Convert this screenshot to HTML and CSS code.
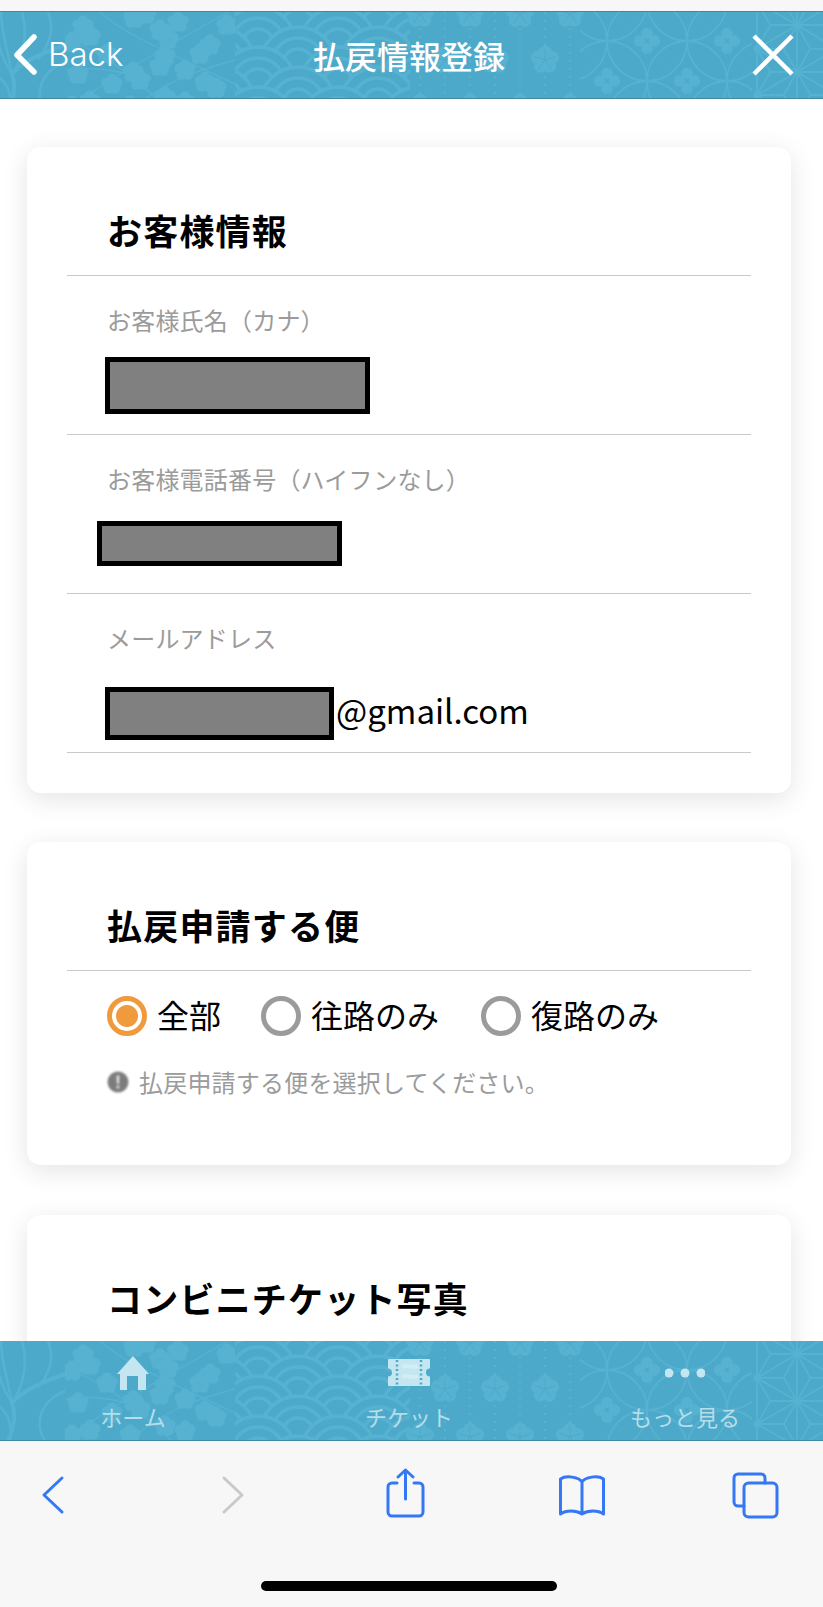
FILE: index.html
```html
<!DOCTYPE html>
<html lang="ja">

<head>
    <meta charset="UTF-8">
    <meta name="viewport" content="width=device-width, initial-scale=1.0">
    <title>払戻情報登録</title>
    <link rel="stylesheet" href="styles.css">
</head>

<body>
    <!-- wagara band shared by the header and the tab bar -->
    <svg class="defs" aria-hidden="true">
        <defs>
            <g id="blossom">
                <circle cx="0" cy="-5.5" r="5.2" />
                <circle cx="5.4" cy="-1.6" r="5.2" />
                <circle cx="3.400" cy="4.500" r="5.2" />
                <circle cx="-3.400" cy="4.500" r="5.2" />
                <circle cx="-5.4" cy="-1.6" r="5.2" />
            </g>
            <g id="ume">
                <circle cx="0" cy="-7.500" r="6.800" />
                <circle cx="7.200" cy="-2.300" r="6.800" />
                <circle cx="4.400" cy="6" r="6.800" />
                <circle cx="-4.400" cy="6" r="6.800" />
                <circle cx="-7.200" cy="-2.300" r="6.800" />
                <path d="M0 0V-11M0 0L10.500 -3.400M0 0L6.500 9M0 0L-6.500 9M0 0L-10.500 -3.400" stroke="#4da9ca" stroke-width="1" />
            </g>
            <g id="clover">
                <circle cx="0" cy="-7.500" r="5.800" />
                <circle cx="7.500" cy="0" r="5.800" />
                <circle cx="0" cy="7.500" r="5.800" />
                <circle cx="-7.500" cy="0" r="5.800" />
            </g>
            <g id="scale" fill="#4da9ca" stroke="#57b2d1" stroke-width="3.5">
                <circle r="38" />
                <circle r="27" />
                <circle r="16" />
            </g>
            <pattern id="seigaiha" width="80" height="40" patternUnits="userSpaceOnUse" patternTransform="translate(18 -7)">
                <use href="#scale" x="40" y="-20" />
                <use href="#scale" x="0" y="0" />
                <use href="#scale" x="80" y="0" />
                <use href="#scale" x="40" y="20" />
                <use href="#scale" x="0" y="40" />
                <use href="#scale" x="80" y="40" />
                <use href="#scale" x="40" y="60" />
            </pattern>
            <clipPath id="clip-plum"><rect x="65" y="0" width="170" height="100" /></clipPath>
            <clipPath id="clip-wave"><rect x="235" y="0" width="175" height="100" /></clipPath>
            <clipPath id="clip-shippo"><rect x="580" y="0" width="172" height="100" /></clipPath>
            <clipPath id="clip-asanoha"><rect x="755" y="0" width="68" height="100" /></clipPath>

            <symbol id="wagara" viewBox="0 0 823 100">
                <!-- lantern curves -->
                <g fill="none" stroke="#57b2d1" stroke-width="2.500">
                    <path d="M12 62C26 42 27 18 22 0" />
                    <path d="M12 62C8 40 1 20 1 0" />
                    <path d="M12 62C4 50 1 42 -2 30" />
                    <path d="M65 33C40 42 22 50 12 62C16 72 14 88 8 100" stroke-width="4" />
                    <path d="M48 0C55 16 50 32 38 47" />
                    <path d="M65 50C40 60 34 82 45 100" />
                    <path d="M0 66C10 74 12 86 10 100" />
                </g>
                <!-- plum branches -->
                <g clip-path="url(#clip-plum)" fill="#57b2d1">
                    <g fill="none" stroke="#57b2d1" stroke-width="1.300">
                        <path d="M66 100C100 72 140 50 235 -4" />
                        <path d="M66 28C100 38 130 62 172 100" />
                        <path d="M100 0C122 20 150 32 235 72" />
                        <path d="M130 100C160 72 190 60 235 48" />
                        <path d="M66 58C90 54 110 58 128 62" />
                    </g>
                    <use href="#blossom" x="83" y="14" />
                    <use href="#blossom" x="90" y="24" />
                    <use href="#blossom" x="72" y="30" />
                    <use href="#blossom" x="107" y="42" />
                    <use href="#blossom" x="134" y="6" />
                    <use href="#blossom" x="146" y="2" />
                    <use href="#blossom" x="160" y="18" />
                    <use href="#blossom" x="168" y="27" />
                    <use href="#blossom" x="178" y="10" />
                    <use href="#blossom" x="227" y="13" />
                    <use href="#blossom" x="210" y="33" />
                    <use href="#blossom" x="200" y="42" />
                    <use href="#blossom" x="165" y="44" />
                    <use href="#blossom" x="160" y="54" />
                    <use href="#blossom" x="185" y="58" />
                    <use href="#blossom" x="205" y="70" />
                    <use href="#blossom" x="216" y="76" />
                    <use href="#blossom" x="133" y="60" />
                    <use href="#blossom" x="140" y="68" />
                    <use href="#blossom" x="78" y="62" />
                    <use href="#blossom" x="90" y="89" />
                    <use href="#blossom" x="72" y="94" />
                    <use href="#blossom" x="112" y="72" />
                    <use href="#blossom" x="165" y="85" />
                    <use href="#blossom" x="185" y="90" />
                    <use href="#blossom" x="130" y="94" />
                </g>
                <!-- seigaiha waves -->
                <rect clip-path="url(#clip-wave)" x="235" y="0" width="175" height="100" fill="url(#seigaiha)" />
                <!-- dotted stripes with ume flowers -->
                <g stroke="#57b2d1" stroke-width="2" stroke-dasharray="2 6">
                    <path d="M420 0V100M445 0V100M470 0V100M495 0V100M520 0V100M545 0V100M570 0V100" />
                </g>
                <g fill="#57b2d1">
                    <use href="#ume" x="420" y="2" />
                    <use href="#ume" x="470" y="2" />
                    <use href="#ume" x="520" y="2" />
                    <use href="#ume" x="570" y="2" />
                    <use href="#ume" x="445" y="48" />
                    <use href="#ume" x="495" y="48" />
                    <use href="#ume" x="545" y="48" />
                    <use href="#ume" x="420" y="96" />
                    <use href="#ume" x="470" y="96" />
                    <use href="#ume" x="520" y="96" />
                    <use href="#ume" x="570" y="96" />
                </g>
                <!-- shippo circles -->
                <g clip-path="url(#clip-shippo)">
                    <g fill="none" stroke="#57b2d1" stroke-width="1.800">
                        <circle cx="567" cy="29" r="40" />
                        <circle cx="647" cy="29" r="40" />
                        <circle cx="727" cy="29" r="40" />
                        <circle cx="607" cy="69" r="40" />
                        <circle cx="687" cy="69" r="40" />
                        <circle cx="767" cy="69" r="40" />
                        <circle cx="647" cy="109" r="40" />
                        <circle cx="727" cy="109" r="40" />
                        <circle cx="607" cy="-11" r="40" />
                        <circle cx="687" cy="-11" r="40" />
                    </g>
                    <g fill="#57b2d1">
                        <use href="#clover" x="647" y="29" />
                        <use href="#clover" x="727" y="29" />
                        <use href="#clover" x="607" y="69" />
                        <use href="#clover" x="687" y="69" />
                    </g>
                </g>
                <!-- asanoha star grid -->
                <g clip-path="url(#clip-asanoha)" fill="none" stroke="#57b2d1" stroke-width="1.800">
                    <path d="M757 -10V106M797 -33V106" />
                    <path d="M757 37L797 13L837 -10M757 83L797 60L837 37M757 -10L797 13L837 37M757 37L797 60L837 83M757 83L797 106L837 83" />
                    <path d="M783.700 36.700L757 37M783.700 36.700L797 13M783.700 36.700L797 60" />
                    <path d="M810.300 36.700L837 37M810.300 36.700L797 13M810.300 36.700L797 60" />
                    <path d="M770.300 60L757 37M770.300 60L757 83M770.300 60L797 60" />
                    <path d="M823.700 60L837 37M823.700 60L837 83M823.700 60L797 60" />
                    <path d="M783.700 83L757 83M783.700 83L797 60M783.700 83L797 106" />
                    <path d="M810.300 83L837 83M810.300 83L797 60M810.300 83L797 106" />
                    <path d="M770.300 13L757 37M770.300 13L757 -10M770.300 13L797 13" />
                    <path d="M823.700 13L837 37M823.700 13L837 -10M823.700 13L797 13" />
                    <path d="M783.700 -10L757 -10M783.700 -10L797 13M810.300 -10L837 -10M810.300 -10L797 13" />
                </g>
                <g fill="#57b2d1">
                    <circle cx="797" cy="13" r="3.500" />
                    <circle cx="757" cy="37" r="3.500" />
                    <circle cx="797" cy="60" r="3.500" />
                    <circle cx="757" cy="83" r="3.500" />
                </g>
            </symbol>
        </defs>
    </svg>

    <div class="status-strip"></div>

    <header class="app-header">
        <svg class="bar-band"><use href="#wagara" width="823" height="100" /></svg>
        <a class="header-back">
            <svg width="30" height="60" viewBox="0 0 30 60">
                <path d="M20 13L3 31L20 48" fill="none" stroke="#fff" stroke-width="5.500" stroke-linecap="round" stroke-linejoin="round" />
            </svg>
            <span>Back</span>
        </a>
        <h1 class="header-title">払戻情報登録</h1>
        <svg class="header-close" width="42" height="42" viewBox="0 0 42 42">
            <path d="M2 2L40 40M40 2L2 40" fill="none" stroke="#fff" stroke-width="4.500" />
        </svg>
    </header>

    <main class="content">
        <section class="card">
            <h2 class="card-title">お客様情報</h2>
            <div class="field">
                <p class="field-label">お客様氏名（カナ）</p>
                <div class="field-value"><span class="redact redact-name"></span></div>
            </div>
            <div class="field">
                <p class="field-label">お客様電話番号（ハイフンなし）</p>
                <div class="field-value"><span class="redact redact-phone"></span></div>
            </div>
            <div class="field">
                <p class="field-label">メールアドレス</p>
                <div class="field-value"><span class="redact redact-mail"></span><span class="mail-domain">@gmail.com</span></div>
            </div>
        </section>

        <section class="card card-flight">
            <h2 class="card-title">払戻申請する便</h2>
            <div class="radios">
                <label class="radio radio-on"><i></i><span>全部</span></label>
                <label class="radio"><i></i><span>往路のみ</span></label>
                <label class="radio"><i></i><span>復路のみ</span></label>
            </div>
            <p class="note">
                <svg class="note-icon" width="22" height="24" viewBox="0 0 22 24">
                    <circle cx="11" cy="12" r="10.500" fill="#7c7c7c" />
                    <path d="M9.600 5.500H12.400L12 14H10Z" fill="#e8e8e8" />
                    <circle cx="11" cy="17" r="1.600" fill="#e8e8e8" />
                </svg>
                払戻申請する便を選択してください。
            </p>
        </section>

        <section class="card">
            <h2 class="card-title">コンビニチケット写真</h2>
        </section>
    </main>

    <nav class="tabbar">
        <svg class="bar-band"><use href="#wagara" width="823" height="100" /></svg>
        <a class="tab">
            <svg width="40" height="40" viewBox="0 0 40 40" fill="#c3e6f0">
                <path d="M20 3L36 21H33V37H25V23H14V37H7V21H4Z" />
            </svg>
            <span>ホーム</span>
        </a>
        <a class="tab">
            <svg width="50" height="40" viewBox="0 0 50 40">
                <path d="M5 6H45A1 1 0 0 1 46 7V15.500A4 4 0 0 0 46 23.500V32A1 1 0 0 1 45 33H5A1 1 0 0 1 4 32V23.500A4 4 0 0 0 4 15.500V7A1 1 0 0 1 5 6Z" fill="#c3e6f0" />
                <path d="M18 14C24 11 28 16 34 13M18 24C24 21 28 26 34 23" fill="none" stroke="#d2edf5" stroke-width="4" />
                <path d="M13 7V33M37 7V33" stroke="#4da9ca" stroke-width="2.500" stroke-dasharray="2 2.500" />
            </svg>
            <span>チケット</span>
        </a>
        <a class="tab">
            <svg width="40" height="40" viewBox="0 0 40 40" fill="#c3e6f0">
                <circle cx="4" cy="20" r="4.500" />
                <circle cx="20" cy="20" r="4.500" />
                <circle cx="36" cy="20" r="4.500" />
            </svg>
            <span>もっと見る</span>
        </a>
    </nav>

    <footer class="toolbar">
        <div class="toolbar-icons">
            <svg width="60" height="60" viewBox="0 0 60 60" class="tool">
                <path d="M39 13L21 30L39 47" />
            </svg>
            <svg width="60" height="60" viewBox="0 0 60 60" class="tool tool-off">
                <path d="M25 13L43 30L25 47" />
            </svg>
            <svg width="60" height="60" viewBox="0 0 60 60" class="tool">
                <path d="M22 18H17A4 4 0 0 0 13 22V47A4 4 0 0 0 17 51H44A4 4 0 0 0 48 47V22A4 4 0 0 0 44 18H39" />
                <path d="M30.500 5V34M23 12L30.500 5L38 12" />
            </svg>
            <svg width="60" height="60" viewBox="0 0 60 60" class="tool">
                <path d="M32 17C29 12 16 10 10.500 14V49C16 45 26 45 32 49C38 45 48 45 53.500 49V14C48 10 35 12 32 17V49" />
            </svg>
            <svg width="60" height="60" viewBox="0 0 60 60" class="tool">
                <path d="M18 41H12A4 4 0 0 1 8 37V13A4 4 0 0 1 12 9H35A4 4 0 0 1 39 13V18" />
                <rect x="18" y="18" width="33" height="34" rx="4.500" />
            </svg>
        </div>
        <div class="home-indicator"></div>
    </footer>
</body>

</html>
```

FILE: styles.css
```css
* {
    box-sizing: border-box;
}

html,
body {
    margin: 0;
    height: 1607px;
    overflow: hidden;
}

body {
    display: flex;
    flex-direction: column;
    background-color: #fff;
    color: #000;
    font-family: "Noto Sans CJK JP", "Noto Sans", sans-serif;
}

.defs {
    position: absolute;
    width: 0;
    height: 0;
}

.status-strip {
    flex: 0 0 11px;
    background-color: #f7f7f7;
}

.bar-band {
    position: absolute;
    left: 0;
    top: 0;
    width: 823px;
    height: 100px;
}

/* header */
.app-header {
    position: relative;
    flex: 0 0 88px;
    overflow: hidden;
    display: flex;
    align-items: center;
    justify-content: center;
    background-color: #4da9ca;
    border-top: 1px solid #3d88a3;
    border-bottom: 1px solid #3d88a3;
}

.header-title {
    position: relative;
    margin: 0 5px 0 0;
    color: #fff;
    font-size: 32px;
    font-weight: 500;
    line-height: 40px;
}

.header-back {
    position: absolute;
    left: 14px;
    top: -1px;
    height: 86px;
    display: flex;
    align-items: center;
    color: #fff;
    font-family: "Inter", "Liberation Sans", sans-serif;
    font-size: 33px;
    font-weight: 300;
}

.header-back svg {
    margin-right: 4px;
}

.header-close {
    position: absolute;
    right: 29px;
    top: 22px;
}

/* cards */
.content {
    flex: 1;
    min-height: 0;
    overflow: hidden;
    padding: 48px 32px 0 27px;
}

.card {
    height: 646px;
    margin-bottom: 49px;
    padding: 0 40px;
    background-color: #fff;
    border-radius: 14px;
    box-shadow: 0 6px 26px rgba(0, 0, 0, 0.11);
}

.card-flight {
    height: 323px;
    margin-bottom: 50px;
}

.card-title {
    height: 129px;
    margin: 0;
    padding: 60px 0 0 40px;
    border-bottom: 1px solid #c9c9c9;
    font-size: 35px;
    font-weight: 700;
    line-height: 46px;
    letter-spacing: 1.2px;
}

.field {
    height: 159px;
    padding: 28px 0 0;
    border-bottom: 1px solid #c9c9c9;
}

.field-label {
    margin: 0 0 0 40px;
    color: #9b9b9b;
    font-size: 24px;
    line-height: 32px;
    letter-spacing: 0.2px;
}

.field-value {
    display: flex;
    align-items: center;
    margin-left: 38px;
}

.redact {
    display: block;
    background-color: #808080;
    border: 5px solid #000;
}

.redact-name {
    width: 265px;
    height: 57px;
    margin-top: 21px;
}

.redact-phone {
    width: 245px;
    height: 45px;
    margin-top: 26px;
    margin-left: -8px;
}

.redact-mail {
    width: 229px;
    height: 53px;
    margin-top: 33px;
}

.mail-domain {
    margin: 25px 0 0 2px;
    font-size: 33px;
    line-height: 40px;
}

/* radio row */
.radios {
    display: flex;
    padding: 25px 0 0 40px;
}

.radio {
    display: flex;
    align-items: center;
    margin-right: 40px;
    font-size: 32px;
    line-height: 40px;
}

.radio + .radio {
    margin-right: 42px;
}

.radio i {
    width: 40px;
    height: 40px;
    margin-right: 10px;
    border: 5px solid #9b9b9b;
    border-radius: 50%;
}

.radio span {
    margin-top: -4px;
}

.radio-on i {
    border-color: #f09a3e;
    background: radial-gradient(circle, #f09a3e 10.5px, #fff 11.5px);
}

.note {
    display: flex;
    align-items: center;
    margin: 30px 0 0 40px;
    color: #9b9b9b;
    font-size: 24px;
    line-height: 32px;
    letter-spacing: 0.2px;
}

.note-icon {
    margin-right: 10px;
    filter: blur(0.8px);
}

/* tab bar */
.tabbar {
    position: relative;
    flex: 0 0 100px;
    overflow: hidden;
    display: grid;
    grid-template-columns: repeat(3, 276px);
    background-color: #4da9ca;
    border-bottom: 1px solid #3d88a3;
}

.tab {
    position: relative;
    left: -5px;
    display: flex;
    flex-direction: column;
    align-items: center;
    padding-top: 12px;
    color: #b5deea;
    font-size: 22px;
    line-height: 30px;
}

.tab span {
    margin-top: 8px;
}

/* browser toolbar */
.toolbar {
    flex: 0 0 166px;
    padding-top: 24px;
    background-color: #f7f7f7;
}

.toolbar-icons {
    display: flex;
    justify-content: space-between;
    padding: 0 37px 0 23px;
}

.tool {
    fill: none;
    stroke: #3478f6;
    stroke-width: 3;
    stroke-linecap: round;
    stroke-linejoin: round;
}

.tool-off {
    stroke: #c9c9c9;
}

.home-indicator {
    width: 296px;
    height: 10px;
    margin: 56px 0 0 261px;
    background-color: #000;
    border-radius: 5px;
}
```
